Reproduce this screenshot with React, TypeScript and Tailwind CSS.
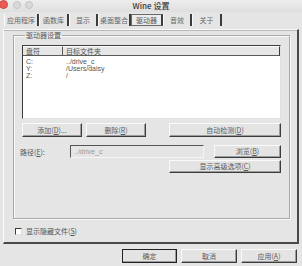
import type { ReactNode } from "react";

const tabs = [
  { label: "应用程序", w: "w-[35px]" },
  { label: "函数库", w: "w-[30px]" },
  { label: "显示", w: "w-[29px]" },
  { label: "桌面整合", w: "w-[33px]" },
  { label: "驱动器", w: "w-[32px]", active: true },
  { label: "音效", w: "w-[29px]" },
  { label: "关于", w: "w-[30px]" },
];

const drives = [
  { letter: "C:", path: "../drive_c" },
  { letter: "Y:", path: "/Users/daisy" },
  { letter: "Z:", path: "/" },
];

// classic raised win32 push button
function Btn({ children, className = "" }: { children: ReactNode; className?: string }) {
  return (
    <div
      className={
        "flex items-center justify-center border border-t-[#fafafa] border-l-[#fafafa] border-r-[#3c3c3c] border-b-[#3c3c3c] bg-[#e4e4e4] text-[#5a5a5a] shadow-[inset_-1px_-1px_0_#9c9c9c] leading-none " +
        className
      }
    >
      {children}
    </div>
  );
}

export default function App() {
  return (
    <div className="w-[302px] h-[266px] overflow-hidden bg-[#e5e5e5] font-['Noto_Sans_CJK_SC','Noto_Sans',sans-serif] text-[7px] text-[#444] flex flex-col">
      {/* title bar */}
      <div className="h-[12px] grid grid-cols-[1fr_auto_1fr] items-center bg-gradient-to-b from-[#eeeeee] to-[#dedede]">
        <div className="flex items-center gap-[3px] -ml-[1px] -mt-[3px]">
          <span className="w-[9px] h-[9px] rounded-full bg-[#ee5a52] border border-[#d0453e]" />
          <span className="w-[8px] h-[8px] rounded-full bg-[#d9d9d9] border border-[#c4c4c4] ml-[2px]" />
          <span className="w-[8px] h-[8px] rounded-full bg-[#d9d9d9] border border-[#c4c4c4] ml-[1px]" />
        </div>
        <div className="text-[8px] text-[#3a3a3a] font-medium -mt-[1px]">Wine 设置</div>
        <div />
      </div>

      {/* tabs */}
      <div className="h-[17px] flex pl-[4px] pt-[2px]">
        {tabs.map((t) =>
          t.active ? (
            <div
              key={t.label}
              className={`${t.w} h-[12px] flex items-center justify-center border border-[#6a6a6a] border-r-2 border-r-[#3c3c3c] bg-[#ececec] text-[#555]`}
            >
              {t.label}
            </div>
          ) : (
            <div
              key={t.label}
              className={`${t.w} h-[12px] flex items-center justify-center border-l border-l-[#fafafa] border-r-2 border-r-[#3c3c3c] text-[#666]`}
            >
              {t.label}
            </div>
          )
        )}
      </div>

      {/* panel */}
      <div className="mx-[3px] h-[215px] border-t border-l border-t-[#fafafa] border-l-[#fafafa] border-r-2 border-b-2 border-r-[#4a4a4a] border-b-[#4a4a4a] shadow-[inset_0_1px_0_#b8b8b8] flex flex-col pl-[9px] pr-[7px] pt-[1px]">
        <fieldset className="h-[188px] border border-[#a9a9a9] shadow-[1px_1px_0_#fafafa,inset_1px_1px_0_#fafafa] px-[8px]">
          <legend className="ml-[3px] px-[1px] text-[#555] leading-[8px]">驱动器设置</legend>

          {/* list view */}
          <div className="mt-[6px] h-[74px] bg-white border border-t-[#3c3c3c] border-l-[#3c3c3c] border-r-[#e0e0e0] border-b-[#e0e0e0] flex flex-col">
            <div className="h-[10px] flex bg-[#e6e6e6]">
              <div className="w-[40px] border-r border-b border-r-[#5a5a5a] border-b-[#5a5a5a] border-t border-t-white pl-[3px] leading-[8px] text-[#555]">
                盘符
              </div>
              <div className="flex-1 border-r border-b border-r-[#3c3c3c] border-b-[#5a5a5a] border-t border-t-white pl-[3px] leading-[8px] text-[#555]">
                目标文件夹
              </div>
            </div>
            <div className="pt-[2px] font-['Liberation_Sans','Noto_Sans_CJK_SC',sans-serif] text-[#555]">
              {drives.map((d) => (
                <div key={d.letter} className="flex h-[7px] leading-[7px]">
                  <span className="w-[43px] pl-[3px]">{d.letter}</span>
                  <span>{d.path}</span>
                </div>
              ))}
            </div>
          </div>

          {/* add / remove / autodetect */}
          <div className="mt-[4px] flex h-[14px]">
            <Btn className="w-[60px]">
              添加(<u>D</u>)...
            </Btn>
            <Btn className="w-[60px] ml-[4px]">
              删除(<u>R</u>)
            </Btn>
            <Btn className="w-[112px] ml-auto">
              自动检测(<u>D</u>)
            </Btn>
          </div>

          {/* path row */}
          <div className="mt-[8px] flex h-[13px] items-center">
            <span className="w-[50px] -ml-[2px] pt-[2px] text-[#555]">
              路径(<u>E</u>):
            </span>
            <div className="w-[134px] h-[13px] border-t border-l border-t-[#555] border-l-[#555] border-b border-r border-b-[#f4f4f4] border-r-[#f4f4f4] pl-[3px] pt-[1px] leading-[10px] font-['Liberation_Sans',sans-serif] text-[#9a9a9a]">
              ../drive_c
            </div>
            <Btn className="w-[67px] h-[13px] ml-auto">
              浏览(<u>B</u>)
            </Btn>
          </div>

          {/* advanced */}
          <div className="mt-[2px] flex h-[13px]">
            <Btn className="w-[112px] ml-auto">
              显示高级选项(<u>C</u>)
            </Btn>
          </div>
        </fieldset>

        <label className="mt-[7px] ml-[2px] flex items-center gap-[4px] text-[#555]">
          <span className="w-[7px] h-[7px] bg-white border border-t-[#3c3c3c] border-l-[#3c3c3c] border-b-[#e0e0e0] border-r-[#e0e0e0]" />
          <span>
            显示隐藏文件(<u>S</u>)
          </span>
        </label>
      </div>

      {/* dialog buttons */}
      <div className="mt-[5px] flex justify-end gap-[4px] pr-[5px] h-[14px]">
        <Btn className="w-[55px] outline outline-1 outline-[#222] -outline-offset-1">确定</Btn>
        <Btn className="w-[56px]">取消</Btn>
        <Btn className="w-[56px]">
          应用(<u>A</u>)
        </Btn>
      </div>
    </div>
  );
}
